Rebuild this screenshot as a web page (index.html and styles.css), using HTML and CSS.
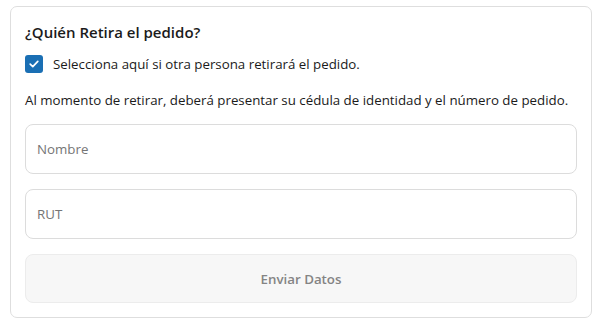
FILE: index.html
```html
<!DOCTYPE html>
<html lang="es">
<head>
  <meta charset="UTF-8" />
  <meta name="viewport" content="width=device-width, initial-scale=1" />
  <title>Quién retira</title>
  <link rel="stylesheet" href="styles.css">
</head>
<body>
  <div class="card">
    <h2 class="title">¿Quién Retira el pedido?</h2>

    <label class="check">
      <span class="box">
        <svg width="12" height="12" viewBox="0 0 12 12"><path d="M2.2 6.2 L4.8 8.6 L9.8 3.4" fill="none" stroke="#fff" stroke-width="1.7" stroke-linecap="round" stroke-linejoin="round"/></svg>
      </span>
      Selecciona aquí si otra persona retirará el pedido.
    </label>

    <p class="note">Al momento de retirar, deberá presentar su cédula de identidad y el número de pedido.</p>

    <form class="form">
      <input type="text" placeholder="Nombre" />
      <input type="text" placeholder="RUT" />
      <button type="submit" disabled>Enviar Datos</button>
    </form>
  </div>
</body>
</html>
```

FILE: styles.css
```css
body {
  font-family: "Open Sans", "Noto Sans", sans-serif;
  background: #fff;
  margin: 0;
  padding: 6px 11px 0 10px;
  color: #1b1b1b;
}
.card {
  border: 1px solid #dedede;
  border-radius: 7px;
  padding: 14px 14px 14px 14px;
}
.title {
  margin: 0;
  font-size: 15px;
  font-weight: 600;
  line-height: 22px;
}
.check {
  display: flex;
  align-items: center;
  gap: 10px;
  height: 18px;
  margin-top: 12px;
  font-size: 13.3px;
}
.box {
  width: 18px;
  height: 18px;
  border-radius: 3px;
  background: #1a6fb4;
  display: flex;
  align-items: center;
  justify-content: center;
}
.note {
  margin: 17px 0 0;
  font-size: 13.3px;
  line-height: 20px;
}
.form {
  display: flex;
  flex-direction: column;
  gap: 15px;
  margin-top: 14px;
}
input[type="text"] {
  box-sizing: border-box;
  height: 50px;
  border: 1px solid #dcdcdc;
  border-radius: 8px;
  padding: 0 11px;
  font-family: inherit;
  font-size: 13.3px;
  color: #333;
}
input::placeholder {
  color: #757575;
}
button {
  box-sizing: border-box;
  height: 49px;
  border: 1px solid #ececec;
  border-radius: 8px;
  background: #f7f7f7;
  color: #848484;
  font-family: inherit;
  font-size: 13.3px;
  font-weight: 600;
}
```
